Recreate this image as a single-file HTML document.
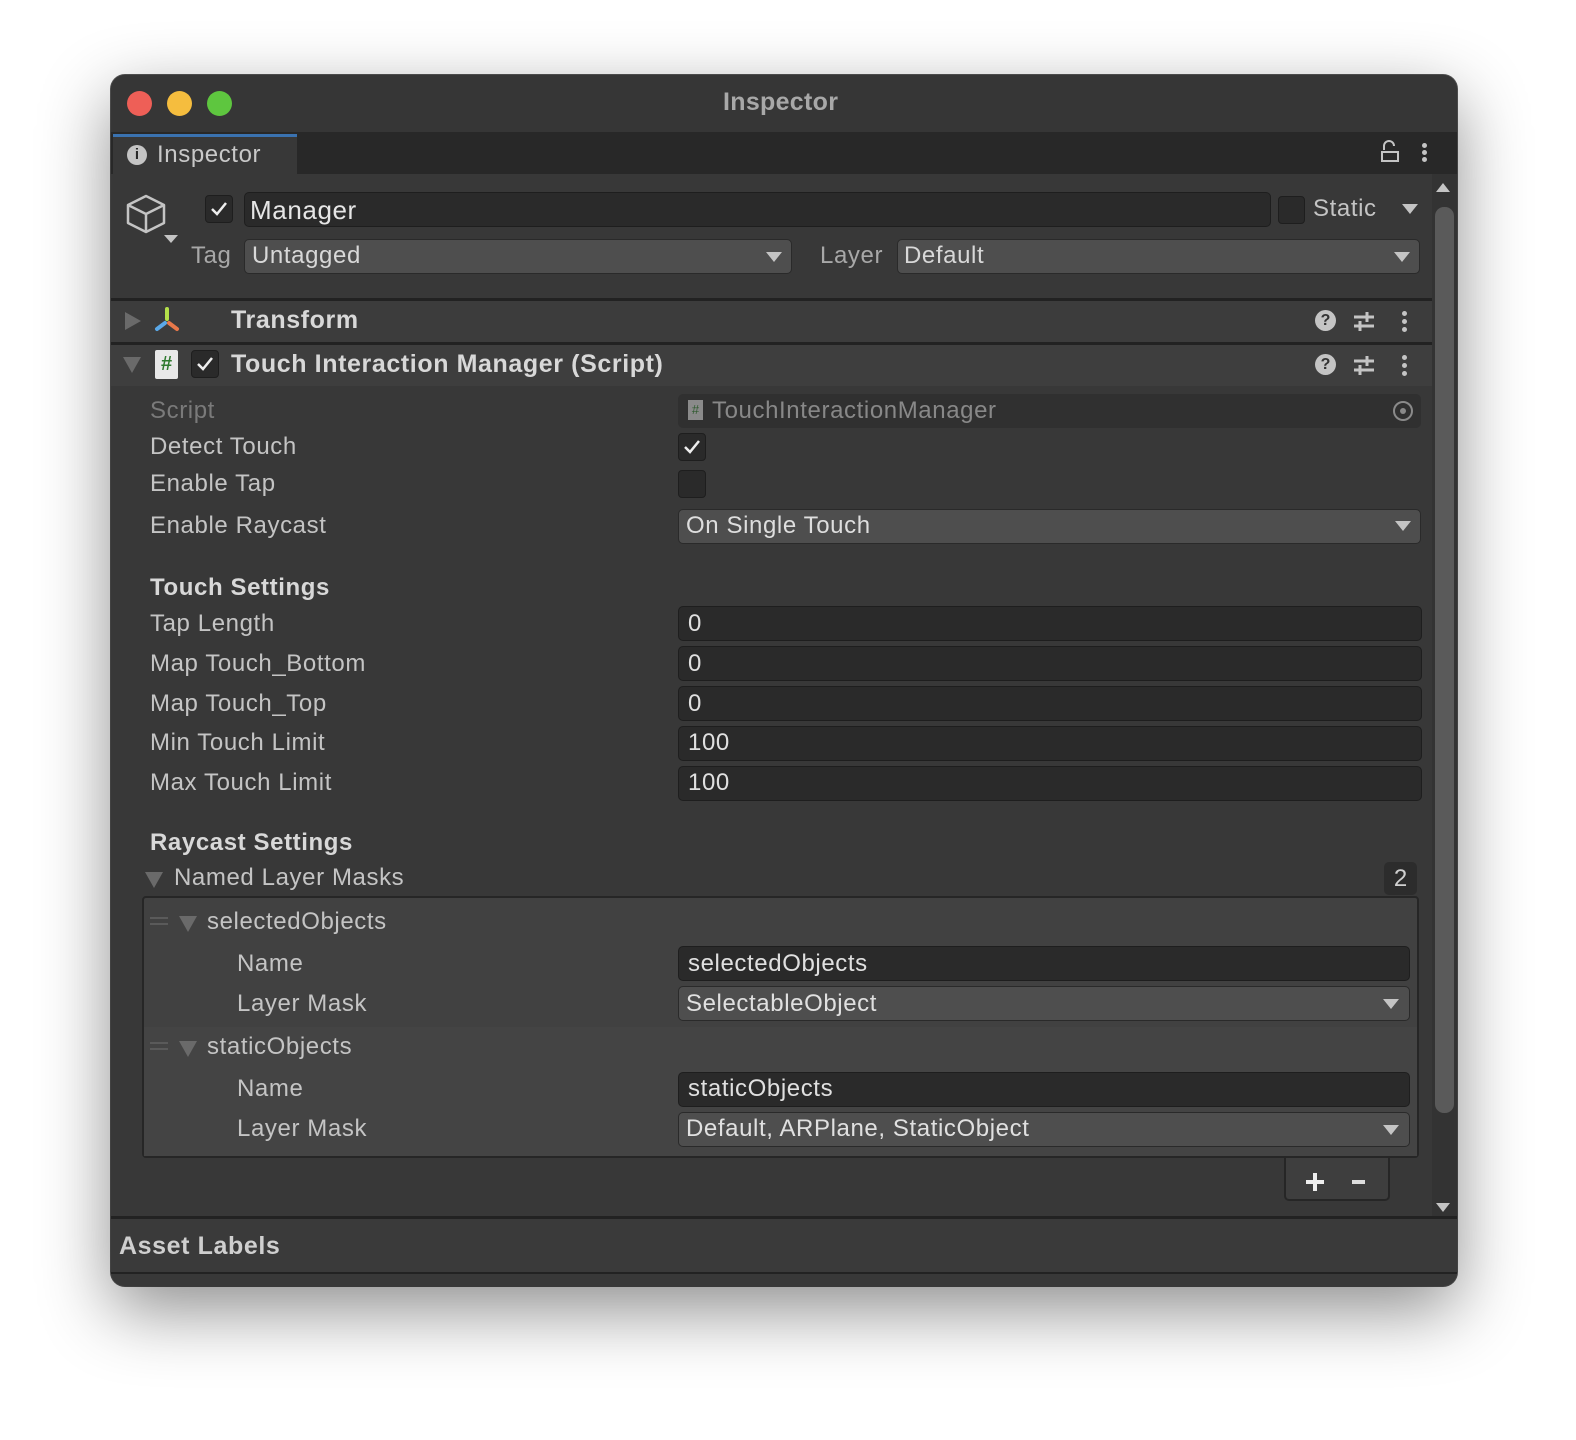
<!DOCTYPE html>
<html><head><meta charset="utf-8">
<style>
*{box-sizing:border-box;margin:0;padding:0}
body{width:1576px;height:1440px;background:#fff;position:relative;overflow:hidden;font-family:"Liberation Sans",sans-serif;color:#d2d2d2}
.a{position:absolute}
.win{left:111px;top:75px;width:1346px;height:1211px;border-radius:14px;background:#383838;box-shadow:0 24px 70px rgba(0,0,0,.45),0 0 0 1px #555;overflow:hidden}
.t{position:absolute;font-size:24px;white-space:nowrap;line-height:36px;letter-spacing:0.6px}
.lbl{color:#c4c4c4}
.fld{position:absolute;background:#2a2a2a;border:1px solid #1e1e1e;border-radius:5px}
.dd{position:absolute;background:#4e4e4e;border:1px solid #2a2a2a;border-radius:5px}
.arr{position:absolute;width:0;height:0;border-left:8px solid transparent;border-right:8px solid transparent;border-top:10px solid #c4c4c4}
.cb{position:absolute;width:28px;height:28px;background:#2a2a2a;border:1px solid #1e1e1e;border-radius:4px}
.tri{position:absolute;width:0;height:0;border-left:9px solid transparent;border-right:9px solid transparent;border-top:16px solid #6a6a6a}
.trr{position:absolute;width:0;height:0;border-top:9px solid transparent;border-bottom:9px solid transparent;border-left:16px solid #6a6a6a}
</style></head><body>
<div class="a win"></div>
<div class="a" style="left:111px;top:75px;width:1346px;height:57px;background:#363636;border-radius:14px 14px 0 0"></div>
<div class="a" style="left:127px;top:91px;width:25px;height:25px;border-radius:50%;background:#ee5f57"></div>
<div class="a" style="left:167px;top:91px;width:25px;height:25px;border-radius:50%;background:#f5bd3e"></div>
<div class="a" style="left:207px;top:91px;width:25px;height:25px;border-radius:50%;background:#5ec63f"></div>
<div class="t" style="left:723px;top:84px;font-weight:bold;color:#a8a8a8;font-size:25px;letter-spacing:0.3px">Inspector</div>
<div class="a" style="left:111px;top:132px;width:1346px;height:42px;background:#282828"></div>
<div class="a" style="left:113px;top:134px;width:184px;height:40px;background:#383838;border-top:3px solid #3a72b0"></div>
<div class="a" style="left:127px;top:145px;width:20px;height:20px;border-radius:50%;background:#c4c4c4;color:#282828;font-size:15px;font-weight:bold;text-align:center;line-height:20px">i</div>
<div class="t" style="left:157px;top:137px;color:#c8c8c8">Inspector</div>
<svg class="a" style="left:1380px;top:140px" width="20" height="24" viewBox="0 0 20 24"><path d="M4 10V6a5 5 0 0 1 10 0" fill="none" stroke="#c4c4c4" stroke-width="2"/><rect x="2" y="12" width="16" height="9" fill="none" stroke="#c4c4c4" stroke-width="2"/></svg>
<div class="a" style="left:1422px;top:143px;width:5px;height:5px;border-radius:50%;background:#c4c4c4;box-shadow:0 7px 0 #c4c4c4,0 14px 0 #c4c4c4"></div>
<div class="a" style="left:1432px;top:174px;width:25px;height:1044px;background:#333"></div>
<div class="a" style="left:1436px;top:183px;width:0;height:0;border-left:7px solid transparent;border-right:7px solid transparent;border-bottom:9px solid #c4c4c4"></div>
<div class="a" style="left:1436px;top:1203px;width:0;height:0;border-left:7px solid transparent;border-right:7px solid transparent;border-top:9px solid #c4c4c4"></div>
<div class="a" style="left:1435px;top:207px;width:19px;height:906px;background:#5a5a5a;border-radius:9px"></div>
<svg class="a" style="left:124px;top:192px" width="58" height="56" viewBox="0 0 58 56"><path d="M22 4 L40 13 L40 31 L22 40 L4 31 L4 13 Z M4 13 L22 22 L40 13 M22 22 L22 40" fill="none" stroke="#c4c4c4" stroke-width="2.5" stroke-linejoin="round"/><path d="M40 43 L54 43 L47 51 Z" fill="#c4c4c4"/></svg>
<div class="cb" style="left:205px;top:195px"></div>
<svg class="a" style="left:209px;top:199px" width="20" height="20"><path d="M3 10 L8 15 L17 4" stroke="#eee" stroke-width="2.5" fill="none"/></svg>
<div class="fld" style="left:244px;top:192px;width:1027px;height:35px"></div>
<div class="t" style="left:250px;top:192px;color:#e6e6e6;font-size:26px">Manager</div>
<div class="cb" style="left:1278px;top:196px;width:27px;height:28px"></div>
<div class="t" style="left:1313px;top:191px;color:#c4c4c4">Static</div>
<div class="arr" style="left:1402px;top:204px"></div>
<div class="t lbl" style="left:191px;top:238px;color:#a8a8a8">Tag</div>
<div class="dd" style="left:244px;top:239px;width:548px;height:35px"></div>
<div class="t" style="left:252px;top:238px;color:#d8d8d8">Untagged</div>
<div class="arr" style="left:766px;top:252px"></div>
<div class="t lbl" style="left:820px;top:238px;color:#a8a8a8">Layer</div>
<div class="dd" style="left:897px;top:239px;width:523px;height:35px"></div>
<div class="t" style="left:904px;top:238px;color:#d8d8d8">Default</div>
<div class="arr" style="left:1394px;top:252px"></div>
<div class="a" style="left:111px;top:298px;width:1321px;height:3px;background:#222"></div>
<div class="a" style="left:111px;top:301px;width:1321px;height:41px;background:#3c3c3c"></div>
<div class="trr" style="left:125px;top:312px"></div>
<svg class="a" style="left:152px;top:305px" width="32" height="30" viewBox="0 0 32 30"><path d="M15 4 L15 14" stroke="#b4e04a" stroke-width="4" stroke-linecap="round"/><path d="M13 18 L5 24" stroke="#5aa8e8" stroke-width="4" stroke-linecap="round"/><path d="M17 18 L25 24" stroke="#e8784a" stroke-width="4" stroke-linecap="round"/></svg>
<div class="t" style="left:231px;top:302px;font-weight:bold;color:#d8d8d8;font-size:25px">Transform</div>
<div class="a" style="left:1315px;top:310px;width:21px;height:21px;border-radius:50%;background:#c4c4c4;color:#333;font-weight:bold;font-size:16px;text-align:center;line-height:21px">?</div>
<svg class="a" style="left:1352px;top:309px" width="24" height="24"><path d="M2 8H22M2 17H22M15 3V13M8 12V22" stroke="#c4c4c4" stroke-width="3" fill="none"/></svg>
<div class="a" style="left:1402px;top:311px;width:5px;height:5px;border-radius:50%;background:#c4c4c4;box-shadow:0 8px 0 #c4c4c4,0 16px 0 #c4c4c4"></div>
<div class="a" style="left:111px;top:342px;width:1321px;height:3px;background:#222"></div>
<div class="a" style="left:111px;top:345px;width:1321px;height:41px;background:#3e3e3e"></div>
<div class="tri" style="left:123px;top:357px"></div>
<div class="a" style="left:155px;top:350px;width:23px;height:29px;background:#e8e8e8;border-radius:2px;color:#2f7a2f;font-weight:bold;font-size:20px;text-align:center;line-height:29px">#</div>
<div class="cb" style="left:191px;top:350px"></div>
<svg class="a" style="left:195px;top:354px" width="20" height="20"><path d="M3 10 L8 15 L17 4" stroke="#eee" stroke-width="2.5" fill="none"/></svg>
<div class="t" style="left:231px;top:346px;font-weight:bold;color:#d8d8d8;font-size:25px">Touch Interaction Manager (Script)</div>
<div class="a" style="left:1315px;top:354px;width:21px;height:21px;border-radius:50%;background:#c4c4c4;color:#333;font-weight:bold;font-size:16px;text-align:center;line-height:21px">?</div>
<svg class="a" style="left:1352px;top:353px" width="24" height="24"><path d="M2 8H22M2 17H22M15 3V13M8 12V22" stroke="#c4c4c4" stroke-width="3" fill="none"/></svg>
<div class="a" style="left:1402px;top:355px;width:5px;height:5px;border-radius:50%;background:#c4c4c4;box-shadow:0 8px 0 #c4c4c4,0 16px 0 #c4c4c4"></div>
<div class="t" style="left:150px;top:393px;color:#7a7a7a">Script</div>
<div class="a" style="left:678px;top:394px;width:743px;height:34px;background:#303030;border-radius:5px"></div>
<div class="a" style="left:688px;top:400px;width:15px;height:20px;background:#8a8a8a;color:#2f5a2f;font-size:13px;text-align:center;line-height:20px">#</div>
<div class="t" style="left:712px;top:393px;color:#888">TouchInteractionManager</div>
<div class="a" style="left:1393px;top:401px;width:20px;height:20px;border-radius:50%;border:2px solid #8a8a8a"></div>
<div class="a" style="left:1400px;top:408px;width:6px;height:6px;border-radius:50%;background:#8a8a8a"></div>
<div class="t lbl" style="left:150px;top:429px">Detect Touch</div>
<div class="cb" style="left:678px;top:433px"></div>
<svg class="a" style="left:682px;top:437px" width="20" height="20"><path d="M3 10 L8 15 L17 4" stroke="#eee" stroke-width="2.5" fill="none"/></svg>
<div class="t lbl" style="left:150px;top:466px">Enable Tap</div>
<div class="cb" style="left:678px;top:470px"></div>
<div class="t lbl" style="left:150px;top:508px">Enable Raycast</div>
<div class="dd" style="left:678px;top:509px;width:743px;height:35px"></div>
<div class="t" style="left:686px;top:508px;color:#dedede">On Single Touch</div>
<div class="arr" style="left:1395px;top:521px"></div>
<div class="t" style="left:150px;top:570px;font-weight:bold;color:#d8d8d8">Touch Settings</div>
<div class="t lbl" style="left:150px;top:606px">Tap Length</div>
<div class="fld" style="left:678px;top:606px;width:744px;height:35px"></div><div class="t" style="left:688px;top:606px;color:#e0e0e0">0</div>
<div class="t lbl" style="left:150px;top:646px">Map Touch_Bottom</div>
<div class="fld" style="left:678px;top:646px;width:744px;height:35px"></div><div class="t" style="left:688px;top:646px;color:#e0e0e0">0</div>
<div class="t lbl" style="left:150px;top:686px">Map Touch_Top</div>
<div class="fld" style="left:678px;top:686px;width:744px;height:35px"></div><div class="t" style="left:688px;top:686px;color:#e0e0e0">0</div>
<div class="t lbl" style="left:150px;top:725px">Min Touch Limit</div>
<div class="fld" style="left:678px;top:726px;width:744px;height:35px"></div><div class="t" style="left:688px;top:725px;color:#e0e0e0">100</div>
<div class="t lbl" style="left:150px;top:765px">Max Touch Limit</div>
<div class="fld" style="left:678px;top:766px;width:744px;height:35px"></div><div class="t" style="left:688px;top:765px;color:#e0e0e0">100</div>
<div class="t" style="left:150px;top:825px;font-weight:bold;color:#d8d8d8">Raycast Settings</div>
<div class="tri" style="left:145px;top:872px"></div>
<div class="t lbl" style="left:174px;top:860px">Named Layer Masks</div>
<div class="a" style="left:1384px;top:862px;width:33px;height:33px;background:#2c2c2c;border-radius:5px;text-align:center;line-height:33px;font-size:24px;color:#d0d0d0">2</div>
<div class="a" style="left:142px;top:896px;width:1277px;height:262px;background:#414141;border:2px solid #262626;border-radius:4px"></div>
<div class="a" style="left:144px;top:1027px;width:1273px;height:129px;background:#444"></div>
<div class="a" style="left:150px;top:917px;width:18px;height:2px;background:#5a5a5a;box-shadow:0 6px 0 #5a5a5a"></div>
<div class="tri" style="left:179px;top:916px"></div>
<div class="t lbl" style="left:207px;top:904px">selectedObjects</div>
<div class="t lbl" style="left:237px;top:946px">Name</div>
<div class="fld" style="left:678px;top:946px;width:732px;height:35px"></div><div class="t" style="left:688px;top:946px;color:#e0e0e0">selectedObjects</div>
<div class="t lbl" style="left:237px;top:986px">Layer Mask</div>
<div class="dd" style="left:678px;top:986px;width:732px;height:35px"></div><div class="t" style="left:686px;top:986px;color:#e0e0e0">SelectableObject</div>
<div class="arr" style="left:1383px;top:999px"></div>
<div class="a" style="left:150px;top:1042px;width:18px;height:2px;background:#5a5a5a;box-shadow:0 6px 0 #5a5a5a"></div>
<div class="tri" style="left:179px;top:1041px"></div>
<div class="t lbl" style="left:207px;top:1029px">staticObjects</div>
<div class="t lbl" style="left:237px;top:1071px">Name</div>
<div class="fld" style="left:678px;top:1072px;width:732px;height:35px"></div><div class="t" style="left:688px;top:1071px;color:#e0e0e0">staticObjects</div>
<div class="t lbl" style="left:237px;top:1111px">Layer Mask</div>
<div class="dd" style="left:678px;top:1112px;width:732px;height:35px"></div><div class="t" style="left:686px;top:1111px;color:#e0e0e0">Default, ARPlane, StaticObject</div>
<div class="arr" style="left:1383px;top:1125px"></div>
<div class="a" style="left:1284px;top:1158px;width:106px;height:43px;background:#3e3e3e;border:2px solid #262626;border-top:none;border-radius:0 0 5px 5px"></div>
<div class="a" style="left:1306px;top:1180px;width:18px;height:4px;background:#eee"></div>
<div class="a" style="left:1313px;top:1173px;width:4px;height:18px;background:#eee"></div>
<div class="a" style="left:1352px;top:1180px;width:13px;height:4px;background:#ddd"></div>
<div class="a" style="left:111px;top:1216px;width:1346px;height:3px;background:#222"></div>
<div class="a" style="left:111px;top:1219px;width:1346px;height:53px;background:#3a3a3a"></div>
<div class="a" style="left:111px;top:1272px;width:1346px;height:2px;background:#222"></div>
<div class="t" style="left:119px;top:1228px;font-weight:bold;color:#cfcfcf;font-size:25px">Asset Labels</div>
</body></html>
